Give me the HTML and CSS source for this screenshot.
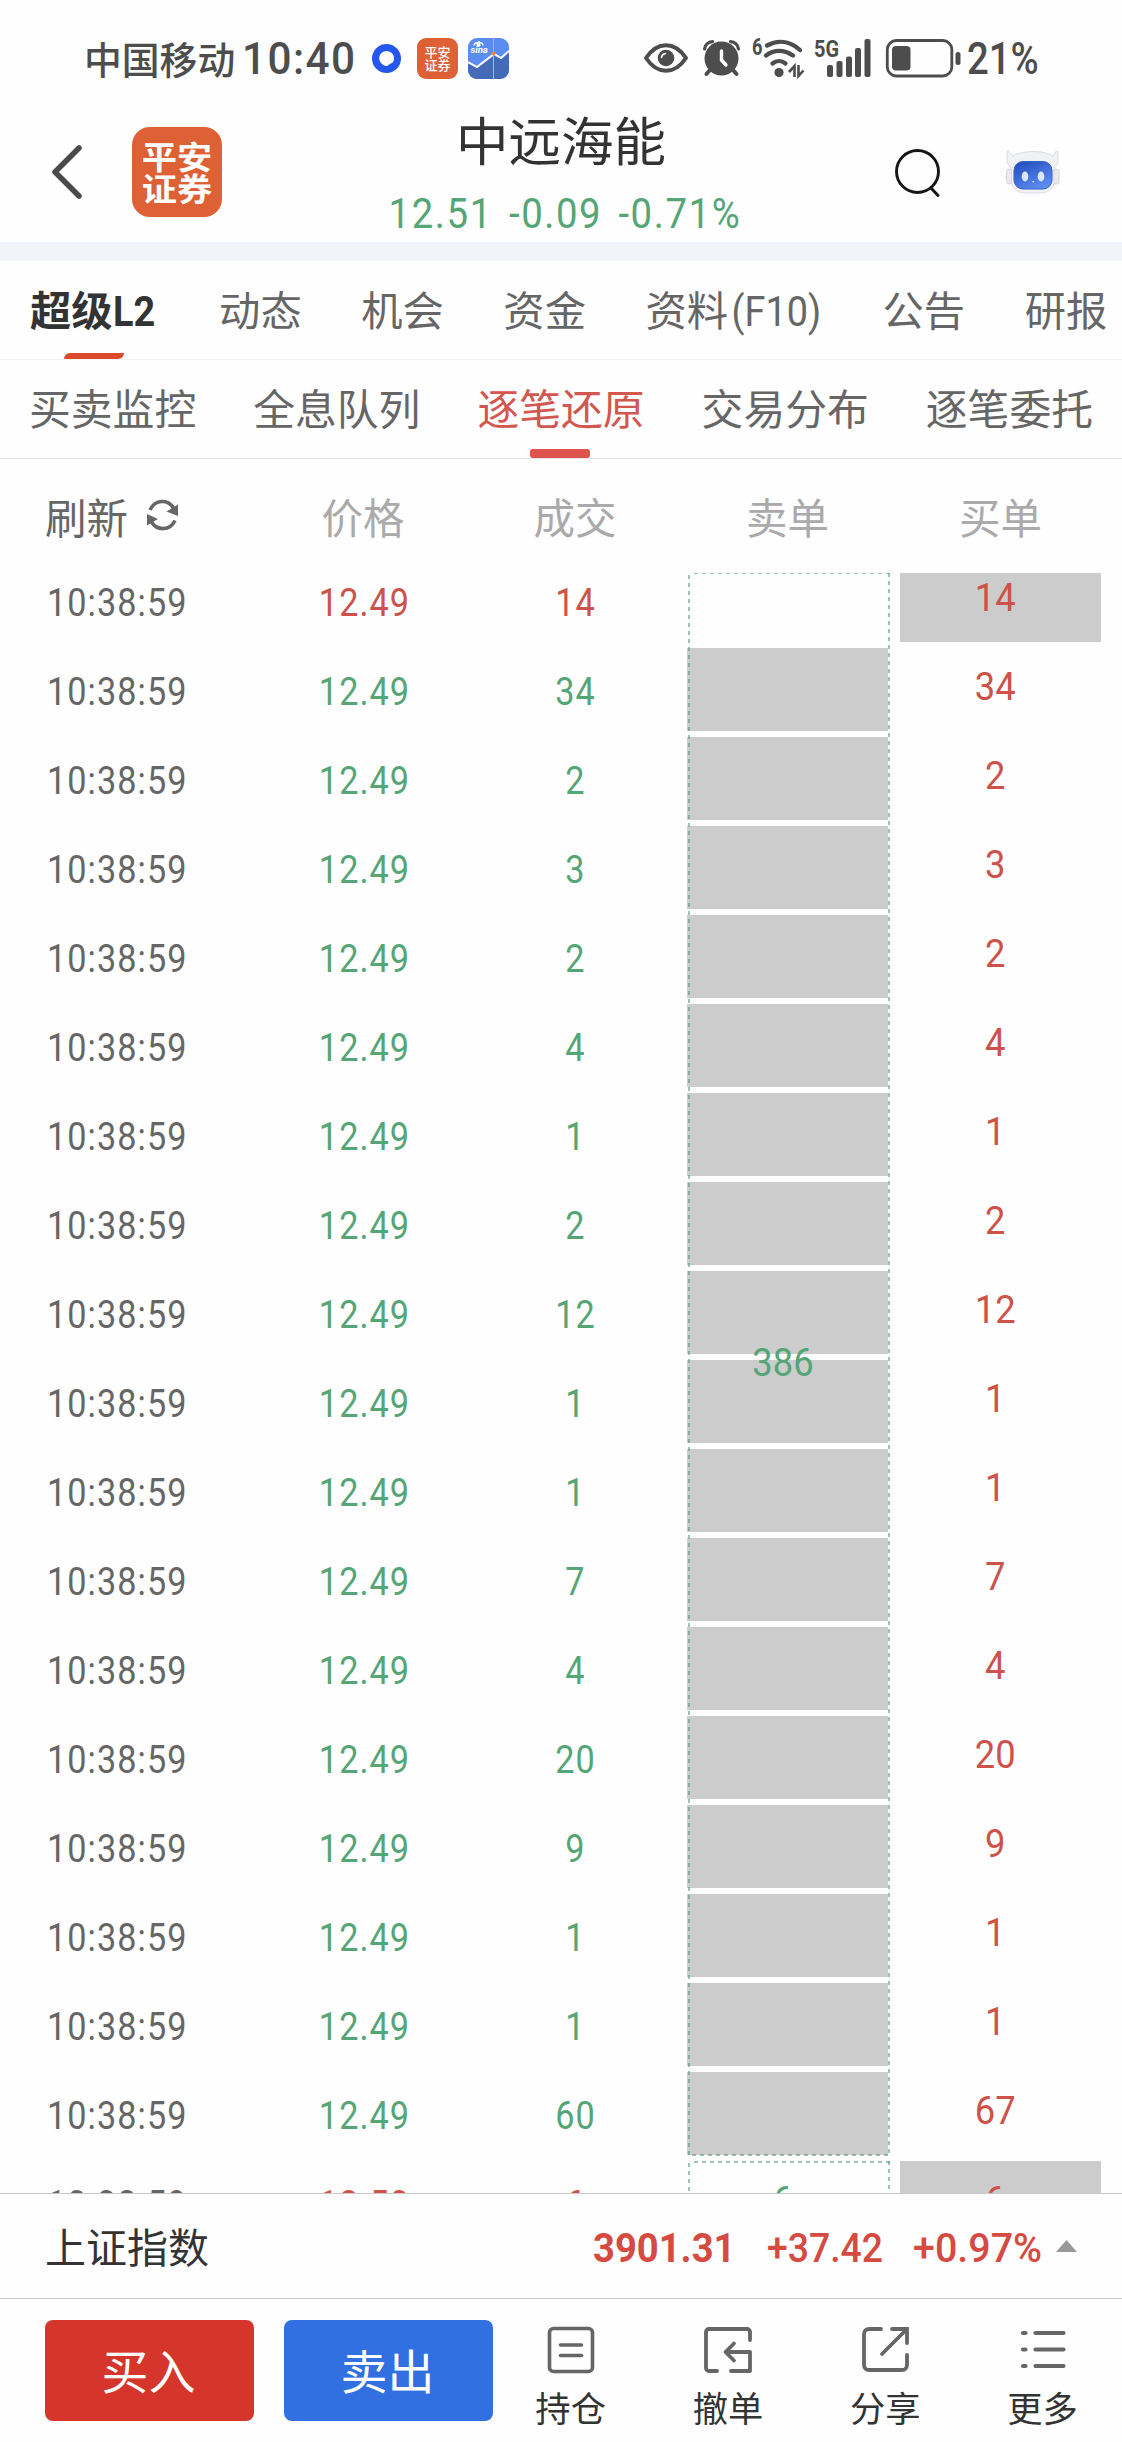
FILE: index.html
```html
<!DOCTYPE html>
<html lang="zh-CN">
<head>
<meta charset="utf-8">
<title>中远海能</title>
<link rel="stylesheet" href="styles.css">
</head>
<body>
<div class="status">
  <span class="carrier">中国移动</span><span class="clock">10:40</span>
  <svg class="ball" viewBox="0 0 29 29"><circle cx="14.500" cy="14.500" r="14.500" fill="#2456f0"/><path d="M15 7a7.300 7.300 0 0 1 7 7.500c0 2.500-1 4.500-3 5-1.500.4-2 1-2.500 1.700-1 1.200-3.500 1-5.500-.5-2-1.400-4-3.500-3.800-6.500C7.400 10 10.500 7 15 7z" fill="#fff"/></svg>
  <span class="mini-logo"><span>平安</span><span>证券</span></span>
  <svg class="sina" viewBox="0 0 41 41"><defs><clipPath id="r"><rect width="41" height="41" rx="9"/></clipPath></defs><g clip-path="url(#r)"><rect width="41" height="41" fill="#5b8df0"/><path d="M0 24l9 5 17-13 7 4 8-7v28H0z" fill="#456bb8"/><path d="M0 24l9 5 17-13 7 4 8-7" fill="none" stroke="#fff" stroke-width="2"/><path d="M25.500 0v41" stroke="#b9b2a8" stroke-width="1"/><circle cx="25.500" cy="15.500" r="2" fill="#e0913c"/><path d="M6 7.500c0-4 9-4 9 0M8 4l1 2M11 3v2" fill="none" stroke="#fff" stroke-width="1.300"/><circle cx="10.500" cy="7" r="2" fill="#fff"/><text x="2.500" y="15" class="sina-word">sina</text></g></svg>
  <svg class="eye" viewBox="0 0 44 30"><path d="M2 15C8 6 15 2.200 22 2.200S36 6 42 15C36 24 29 27.800 22 27.800S8 24 2 15z" fill="none" stroke="#4d4d4d" stroke-width="4" stroke-linejoin="round"/><circle cx="22" cy="15" r="8.300" fill="#4d4d4d"/><path d="M17.500 14.500c.3-2.200 1.800-3.600 4-4" fill="none" stroke="#fff" stroke-width="1.600" stroke-linecap="round"/></svg>
  <svg class="alarm" viewBox="0 0 37 36"><circle cx="18.500" cy="18.500" r="17" fill="#4d4d4d"/><path d="M1.500 9C2 5 5 2 9.500 1.700M35.500 9C35 5 32 2 27.500 1.700" fill="none" stroke="#4d4d4d" stroke-width="3.200" stroke-linecap="round"/><path d="M7 30l-3.500 4M30 30l3.500 4" stroke="#4d4d4d" stroke-width="4" stroke-linecap="round"/><path d="M18.500 11v9l4.500 5" fill="none" stroke="#fff" stroke-width="3.400" stroke-linecap="round"/></svg>
  <svg class="wifi" viewBox="0 0 52 40"><text x="0" y="17" class="net" textLength="10.500" lengthAdjust="spacingAndGlyphs">6</text><g fill="none" stroke="#4d4d4d" stroke-width="4.300" stroke-linecap="round"><path d="M15 7.500C26 1.500 38 3 48 12"/><path d="M14 17.500c8-6 18-6 27 0"/><path d="M20.500 25.500c4-3.300 9-3.300 13 0"/></g><circle cx="27" cy="34.500" r="4.600" fill="#4d4d4d"/><path d="M42.500 39V28l-5.500 6M46.500 27v11l5-5.500" fill="none" stroke="#4d4d4d" stroke-width="2.600"/></svg>
  <svg class="cell" viewBox="0 0 57 38"><text x="0" y="18" class="net" textLength="25" lengthAdjust="spacingAndGlyphs">5G</text><g fill="#4d4d4d"><rect x="13" y="26" width="6" height="12" rx="2"/><rect x="22.500" y="22" width="6" height="16" rx="2"/><rect x="32" y="17.500" width="6" height="20.500" rx="2"/><rect x="41" y="9" width="6" height="29" rx="2"/><rect x="50.500" y="0" width="6" height="38" rx="2"/></g></svg>
  <svg class="battery" viewBox="0 0 75 39"><rect x="1.300" y="1.500" width="64.500" height="35.500" rx="9" fill="none" stroke="#4d4d4d" stroke-width="2.800"/><rect x="6" y="7" width="18.500" height="24.500" rx="4" fill="#4d4d4d"/><rect x="69.500" y="13" width="5" height="13" rx="2.500" fill="#4d4d4d"/></svg>
  <span class="percent">21%</span>
</div>

<header class="head">
  <svg class="back" viewBox="0 0 30 54"><path d="M27 3L3 27l24 24" fill="none" stroke="#4a4a4a" stroke-width="5.500" stroke-linecap="round" stroke-linejoin="round"/></svg>
  <div class="logo"><span>平安</span><span>证券</span></div>
  <div class="stock">
    <h1>中远海能</h1>
    <div class="quote"><span>12.51</span><span>-0.09</span><span>-0.71%</span></div>
  </div>
  <svg class="search" viewBox="0 0 46 49"><circle cx="22.500" cy="22.500" r="21" fill="none" stroke="#161616" stroke-width="2.900"/><path d="M36 39l7 7.500" stroke="#161616" stroke-width="3" stroke-linecap="round"/></svg>
  <svg class="robot" viewBox="0 0 54 44"><defs><linearGradient id="b" x1="0" y1="0" x2=".6" y2="1"><stop offset="0" stop-color="#1f48bb"/><stop offset="1" stop-color="#5b8cf0"/></linearGradient></defs><path d="M1 12V3c0-3 2-3 3 0l3 3c9-6 31-6 40 0l2-3c1-3 4-3 3 0v9c-1 3-2 4-3 5v12c0 9-7 14-14 14H19C12 43 6 39 5 31V17C3 16 1 14 1 12z" fill="#f0f1f5" stroke="#dcdde3"/><rect x=".5" y="19" width="5" height="15" rx="2.500" fill="#eee9ea" stroke="#d8d3d6"/><rect x="48" y="19" width="5" height="15" rx="2.500" fill="#eee9ea" stroke="#d8d3d6"/><rect x="8" y="11.500" width="38" height="27.500" rx="9" fill="url(#b)" stroke="#3560c4"/><ellipse cx="19" cy="26.500" rx="3.300" ry="5" fill="#dce7ff"/><ellipse cx="35" cy="26.500" rx="3.300" ry="5" fill="#dce7ff"/><path d="M26 31h2.500l-1.200 2z" fill="#dce7ff"/></svg>
</header>

<nav class="tabs">
  <span class="active">超级<i>L2</i></span><span>动态</span><span>机会</span><span>资金</span><span>资料<i>(F10)</i></span><span>公告</span><span>研报</span>
</nav>
<nav class="subtabs">
  <span>买卖监控</span><span>全息队列</span><span class="active">逐笔还原</span><span>交易分布</span><span>逐笔委托</span>
</nav>

<main>
  <div class="thead">
    <span class="refresh">刷新<svg viewBox="0 0 31 30"><g fill="none" stroke="#666" stroke-width="3.600"><path d="M3 10C8-1 21-1 26.500 8"/><path d="M28 20.500C23 31 10 31 4.500 22"/></g><path d="M31 4.500V16l-11.500-4.500zM0 25.500V14l11 5z" fill="#666"/></svg></span>
    <span>价格</span><span>成交</span><span>卖单</span><span>买单</span>
  </div>
  <div class="board">
    <div class="ticks">
      <div class="tick up"><time>10:38:59</time><b>12.49</b><b>14</b></div>
      <div class="tick"><time>10:38:59</time><b>12.49</b><b>34</b></div>
      <div class="tick"><time>10:38:59</time><b>12.49</b><b>2</b></div>
      <div class="tick"><time>10:38:59</time><b>12.49</b><b>3</b></div>
      <div class="tick"><time>10:38:59</time><b>12.49</b><b>2</b></div>
      <div class="tick"><time>10:38:59</time><b>12.49</b><b>4</b></div>
      <div class="tick"><time>10:38:59</time><b>12.49</b><b>1</b></div>
      <div class="tick"><time>10:38:59</time><b>12.49</b><b>2</b></div>
      <div class="tick"><time>10:38:59</time><b>12.49</b><b>12</b></div>
      <div class="tick"><time>10:38:59</time><b>12.49</b><b>1</b></div>
      <div class="tick"><time>10:38:59</time><b>12.49</b><b>1</b></div>
      <div class="tick"><time>10:38:59</time><b>12.49</b><b>7</b></div>
      <div class="tick"><time>10:38:59</time><b>12.49</b><b>4</b></div>
      <div class="tick"><time>10:38:59</time><b>12.49</b><b>20</b></div>
      <div class="tick"><time>10:38:59</time><b>12.49</b><b>9</b></div>
      <div class="tick"><time>10:38:59</time><b>12.49</b><b>1</b></div>
      <div class="tick"><time>10:38:59</time><b>12.49</b><b>1</b></div>
      <div class="tick"><time>10:38:59</time><b>12.49</b><b>60</b></div>
      <div class="tick up"><time>10:38:59</time><b>12.50</b><b>6</b></div>
    </div>
    <div class="sells">
      <div class="order">
        <div class="blocks"><i></i><i></i><i></i><i></i><i></i><i></i><i></i><i></i><i></i><i></i><i></i><i></i><i></i><i></i><i></i><i></i><i></i></div>
        <div class="outline"></div>
        <b>386</b>
      </div>
      <div class="order next">
        <div class="outline"></div>
        <b>6</b>
      </div>
    </div>
    <div class="buys">
      <div class="buy filled"><b>14</b></div>
      <div class="buy"><b>34</b></div>
      <div class="buy"><b>2</b></div>
      <div class="buy"><b>3</b></div>
      <div class="buy"><b>2</b></div>
      <div class="buy"><b>4</b></div>
      <div class="buy"><b>1</b></div>
      <div class="buy"><b>2</b></div>
      <div class="buy"><b>12</b></div>
      <div class="buy"><b>1</b></div>
      <div class="buy"><b>1</b></div>
      <div class="buy"><b>7</b></div>
      <div class="buy"><b>4</b></div>
      <div class="buy"><b>20</b></div>
      <div class="buy"><b>9</b></div>
      <div class="buy"><b>1</b></div>
      <div class="buy"><b>1</b></div>
      <div class="buy last"><b>67</b></div>
      <div class="buy filled upcoming"><b>6</b></div>
    </div>
  </div>
</main>

<section class="index">
  <span class="index-name">上证指数</span>
  <b class="point">3901.31</b><b class="delta">+37.42</b><b class="rate">+0.97%</b>
  <svg viewBox="0 0 21 12"><path d="M10.500 0L21 12H0z" fill="#999"/></svg>
</section>

<footer class="bar">
  <button class="btn-buy">买入</button>
  <button class="btn-sell">卖出</button>
  <div class="actions">
    <div class="action"><svg viewBox="0 0 48 48"><g fill="none" stroke="#666" stroke-width="3.600" stroke-linecap="round"><rect x="2.500" y="2.500" width="43" height="43" rx="4"/><path d="M13.500 19h21M13.500 29.500h21"/></g></svg><span>持仓</span></div>
    <div class="action"><svg viewBox="0 0 48 48"><g fill="none" stroke="#666" stroke-width="3.800" stroke-linecap="round" stroke-linejoin="round"><path d="M13 45H5a3 3 0 0 1-3-3V6a3 3 0 0 1 3-3h38a3 3 0 0 1 3 3v8"/><path d="M27 45h19V26H22M30 17.500L21.500 26l8.500 8.500"/></g></svg><span>撤单</span></div>
    <div class="action"><svg viewBox="0 0 48 48"><g fill="none" stroke="#666" stroke-width="3.800" stroke-linecap="round"><path d="M20 3H8a5 5 0 0 0-5 5v31a5 5 0 0 0 5 5h33a5 5 0 0 0 5-5V29"/><path d="M31 3h15v14M45 4L21 28"/></g></svg><span>分享</span></div>
    <div class="action"><svg viewBox="0 0 48 48"><path d="M4 7h2.500M16.500 7h28M4 23.500h2.500M16.500 23.500h28M4 40h2.500M16.500 40h28" stroke="#666" stroke-width="4.200" stroke-linecap="round"/></svg><span>更多</span></div>
  </div>
</footer>
</body>
</html>
```
FILE: styles.css
```css
* { box-sizing: border-box; }
body {
  margin: 0;
  width: 1122px;
  height: 2442px;
  overflow: hidden;
  background: #fefefe;
  color: #666;
  font-family: Roboto, "Noto Sans CJK SC", sans-serif;
}
svg { display: block; flex: none; overflow: visible; }
b, i, h1 { font-weight: 400; font-style: normal; margin: 0; }
span, b, time, h1 { white-space: nowrap; }

/* system status bar */
.status {
  display: flex;
  align-items: center;
  height: 116px;
  padding-left: 84px;
  color: #4d4d4d;
}
.carrier { width: 158px; padding-bottom: 1px; font: 700 37.800px/60px "Noto Sans CJK SC", sans-serif; font-weight: 500; }
.clock { width: 130px; padding-top: 1px; font-size: 44.500px; font-weight: 500; letter-spacing: 1.500px; transform: scaleX(.95); transform-origin: left; }
.ball { width: 29px; height: 29px; }
.mini-logo, .logo {
  display: flex;
  flex-direction: column;
  align-items: center;
  justify-content: center;
  flex: none;
  color: #fff;
  background: #de6035;
  font-family: "Noto Sans CJK SC", sans-serif;
}
.mini-logo { width: 41px; height: 41px; margin-left: 16px; border-radius: 9px; font-size: 13px; line-height: 13px; font-weight: 500; }
.sina { width: 41px; height: 41px; margin-left: 10px; }
.sina-word { font: italic 700 9.500px Roboto, sans-serif; fill: #fff; }
.eye { width: 44px; height: 30px; margin-left: 135px; }
.alarm { width: 37px; height: 36px; margin-left: 15px; }
.wifi { width: 52px; height: 40px; margin-left: 12px; }
.net { font: 700 24px Roboto, sans-serif; fill: #4d4d4d; }
.cell { width: 57px; height: 38px; margin-left: 10px; }
.battery { width: 75px; height: 39px; margin-left: 15px; }
.percent { margin-left: 6px; padding-top: 1px; font-size: 44.500px; font-weight: 500; transform: scaleX(.86); transform-origin: left; }

/* stock header */
.head {
  display: flex;
  align-items: flex-start;
  height: 145px;
  padding-left: 52px;
  border-bottom: 19px solid #f3f4f9;
}
.back { width: 30px; height: 54px; margin-top: 29px; }
.logo { width: 90px; height: 90px; margin: 11px 0 0 50px; padding-bottom: 3px; border-radius: 18px; font-size: 32px; line-height: 32px; font-weight: 700; }
.logo span { transform: scaleX(1.1); }
.stock { width: 350px; margin-left: 164px; display: flex; flex-direction: column; align-items: center; }
h1 { height: 76px; margin-top: -11px; font-size: 52.500px; line-height: 76px; color: #333; }
.quote { display: flex; gap: 18px; height: 44px; margin-top: 11px; font-size: 42.500px; line-height: 44px; letter-spacing: 1.800px; color: #55a576; transform: translateX(4px) scaleX(.9); }
.search { width: 46px; height: 49px; margin: 33px 0 0 159px; }
.robot { width: 54px; height: 44px; margin: 34px 0 0 65px; }

/* tab rows */
.tabs, .subtabs { display: flex; padding-left: 30px; white-space: nowrap; }
.tabs { height: 99px; gap: 59.500px; border-bottom: 1px solid #f2f2f2; font-size: 41.300px; line-height: 102px; }
.tabs i { display: inline-block; width: 95px; padding-left: 4px; font-size: 42px; transform: scaleX(.9); transform-origin: left; }
.tabs .active { position: relative; height: 98px; color: #333; font-weight: 700; }
.tabs .active i { width: 47px; padding: 0; font-weight: 700; }
.tabs .active::after {
  content: "";
  position: absolute;
  left: 34px;
  bottom: 0;
  width: 60px;
  height: 6px;
  background: #dc4a2c;
  border-radius: 6px 0;
}
.subtabs { height: 99px; padding-left: 29px; gap: 57px; border-bottom: 1px solid #e5e5e5; font-size: 41.800px; line-height: 101px; }
.subtabs .active { position: relative; height: 98px; color: #d15750; }
.subtabs .active::after {
  content: "";
  position: absolute;
  left: 53px;
  bottom: 0;
  width: 60px;
  height: 9px;
  background: #e0524d;
  border-radius: 3px;
}

/* tick table */
main { height: 1734px; overflow: hidden; }
.thead {
  display: grid;
  grid-template-columns: 257px 212px 212px 213px 213px;
  height: 114px;
  line-height: 121px;
  font-size: 41.500px;
  color: #aaa;
  text-align: center;
}
.thead .refresh { display: flex; align-items: center; padding-left: 45px; color: #666; }
.refresh svg { width: 31px; height: 30px; margin: -9px 0 0 19px; }
.board { display: flex; }
.ticks { width: 687px; }
.tick {
  display: grid;
  grid-template-columns: 259px 209px 213px;
  height: 89px;
  line-height: 61px;
  font-size: 38px;
  letter-spacing: 1.200px;
  color: #55a576;
  text-align: center;
}
.tick.up { color: #cd5249; }
time { padding-left: 47px; color: #666; text-align: left; transform: scaleX(.9); transform-origin: 47px 50%; }
.tick b { transform: translateX(1px) scaleX(.9); }
.sells { width: 203px; }
.order { position: relative; height: 1583px; padding-top: 75px; }
.order.next { height: 89px; margin-top: 5px; }
.blocks { display: flex; flex-direction: column; gap: 6px; width: 201px; }
.blocks i { height: 83px; background: #ccc; }
.outline {
  --dash: rgba(72, 152, 112, .55);
  position: absolute;
  inset: 0 0 0 1px;
  background:
    repeating-linear-gradient(90deg, var(--dash) 0 4px, transparent 4px 8px) 6px 0 / 196px 1px no-repeat,
    repeating-linear-gradient(90deg, var(--dash) 0 4px, transparent 4px 8px) 4px 100% / 198px 2px no-repeat,
    repeating-linear-gradient(var(--dash) 0 4px, transparent 4px 8px) 0 2px / 2px 100% no-repeat,
    repeating-linear-gradient(var(--dash) 0 4px, transparent 4px 8px) 100% 0 / 2px 100% no-repeat;
}
.next .outline { background-size: 196px 2px, 0 0, 2px 100%, 2px 100%; }
.order b {
  position: absolute;
  inset: 761px 0 auto;
  margin-right: 11px;
  line-height: 58px;
  font-size: 39.500px;
  color: #55a576;
  text-align: center;
  transform: scaleX(.92);
}
.order.next b { top: 11px; }
.buys { width: 201px; margin-left: 10px; }
.buy {
  height: 83px;
  margin-bottom: 6px;
  padding-right: 10px;
  line-height: 50px;
  font-size: 39.500px;
  color: #cd5249;
  text-align: center;
}
.buy.filled { height: 69px; margin-bottom: 20px; background: #ccc; }
.buy.last { margin-bottom: -8px; }
.buy.upcoming { line-height: 79px; }
.buy b { display: inline-block; transform: scaleX(.92); }

/* index strip */
.index {
  display: flex;
  align-items: center;
  height: 106px;
  padding-left: 45px;
  background: #fefefe;
  border: solid #c9c9c9;
  border-width: 1px 0;
  color: #d54a41;
}
.index-name { width: 548px; padding-bottom: 2px; font-size: 41px; color: #333; }
.index b { padding-top: 2px; font-size: 41.500px; font-weight: 500; transform: scaleX(.9); transform-origin: left; }
.index .point { width: 174px; font-weight: 700; transform: scaleX(.92); }
.index .delta { width: 146px; }
.index .rate { width: 143px; transform: scaleX(.95); }
.index svg { width: 21px; height: 12px; }

/* trade bar */
.bar { display: flex; padding: 21px 0 0 45px; }
.bar button {
  width: 209px;
  height: 101px;
  margin-right: 30px;
  padding: 0 2px 4px 0;
  border: 0;
  border-radius: 8px;
  color: #fff;
  font: 400 47px "Noto Sans CJK SC", sans-serif;
}
.btn-buy { background: #d5352a; }
.btn-sell { background: #3270e2; }
.actions { display: flex; margin-left: -31px; }
.action { width: 157.300px; display: flex; flex-direction: column; align-items: center; padding-top: 6px; color: #333; font-size: 35.300px; line-height: 48px; }
.action svg { width: 48px; height: 48px; margin-bottom: 12px; }
```
